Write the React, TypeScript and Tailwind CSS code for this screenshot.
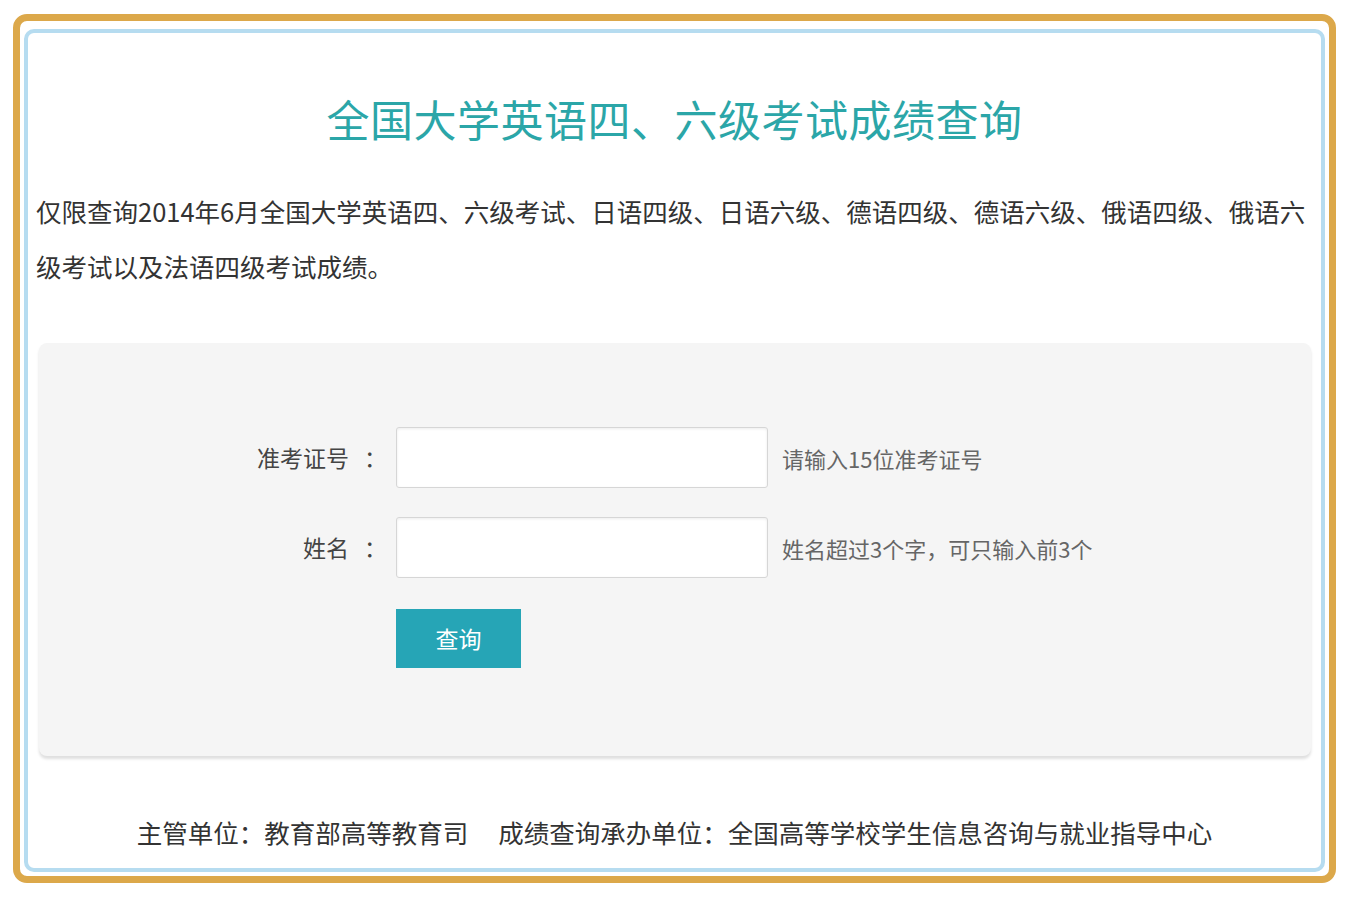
import React from "react";

const cjk = { fontFamily: '"Noto Sans CJK SC", "Noto Sans", sans-serif' };

const FormRow = ({ label, hint }: { label: string; hint: string }) => (
  <div className="flex items-center">
    <div className="flex w-[348px] items-center justify-end text-[23px] leading-none text-[#444]">
      <span>{label}</span>
      <span className="ml-[15px]">：</span>
    </div>
    <input
      type="text"
      className="ml-[9px] h-[61px] w-[372px] rounded-[3px] border border-[#d6d6d6] bg-white shadow-[inset_0_1px_3px_rgba(0,0,0,0.08)] outline-none"
    />
    <div className="ml-[14px] text-[22px] leading-none text-[#666]">{hint}</div>
  </div>
);

export default function App() {
  return (
    <div className="min-h-screen bg-white pl-[13px] pt-[14px]" style={cjk}>
      {/* orange outer frame */}
      <div className="h-[869px] w-[1323px] rounded-[14px] border-[7px] border-[#dca84a] px-[4px] pb-[4px] pt-[8px]">
        {/* blue inner frame */}
        <div className="flex h-full flex-col rounded-[10px] border-[4px] border-[#b6dcf0] bg-white">
          <h1 className="mt-[64px] text-center text-[43px] leading-none tracking-[0.5px] text-[#2ba6a8]">
            全国大学英语四、六级考试成绩查询
          </h1>

          <p className="mt-[43px] whitespace-nowrap pl-[8px] text-[25.5px] leading-[55px] text-[#333]">
            仅限查询2014年6月全国大学英语四、六级考试、日语四级、日语六级、德语四级、德语六级、俄语四级、俄语六
            <br />
            级考试以及法语四级考试成绩。
          </p>

          {/* query panel */}
          <div className="ml-[11px] mr-[10px] mt-[50px] flex h-[413px] flex-col gap-[29px] rounded-[8px] bg-[#f5f5f5] pt-[84px] shadow-[0_3px_3px_rgba(0,0,0,0.13)]">
            <FormRow label="准考证号" hint="请输入15位准考证号" />
            <FormRow label="姓名" hint="姓名超过3个字，可只输入前3个" />
            <div className="pl-[357px]">
              <button className="mt-[2px] h-[59px] w-[125px] bg-[#26a5b6] text-[23px] text-white">
                查询
              </button>
            </div>
          </div>

          <div className="mt-[63px] text-center text-[25.5px] leading-none text-[#333]">
            主管单位：教育部高等教育司
            <span className="ml-[30px]">成绩查询承办单位：全国高等学校学生信息咨询与就业指导中心</span>
          </div>
        </div>
      </div>
    </div>
  );
}
